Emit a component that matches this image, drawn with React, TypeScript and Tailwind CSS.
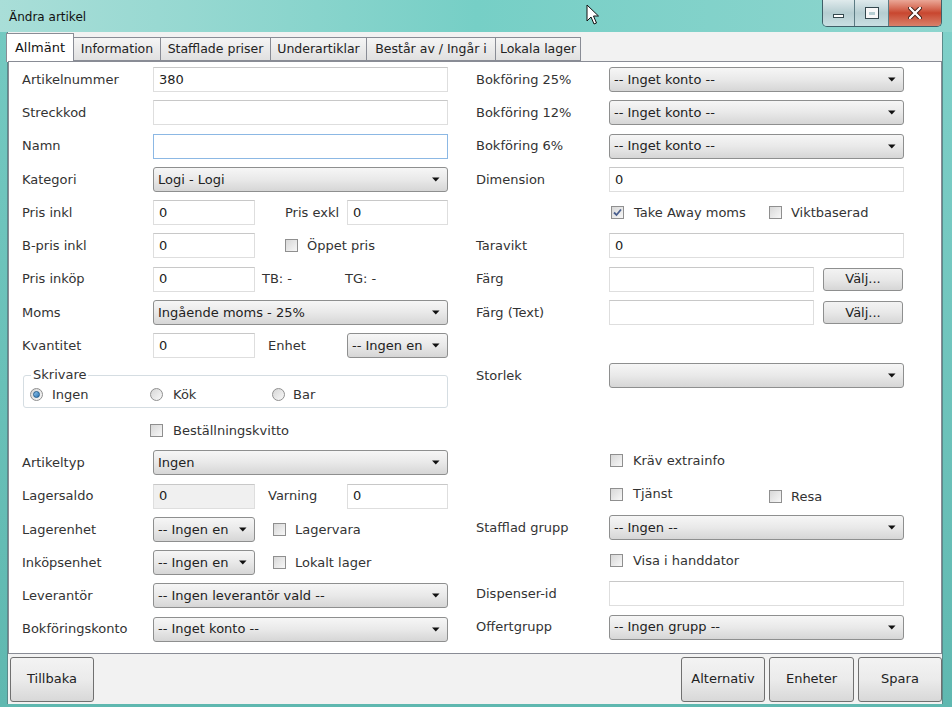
import React from "react";

type Props = { children?: React.ReactNode; className?: string };

function Arrow() {
  return (
    <svg width="8" height="5" viewBox="0 0 8 5" className="shrink-0">
      <path d="M0 0.5h7.5L3.75 4.5z" fill="#111" />
    </svg>
  );
}

function TextBox({
  value = "",
  className = "",
  focused = false,
  disabled = false,
}: {
  value?: string;
  className?: string;
  focused?: boolean;
  disabled?: boolean;
}) {
  const border = focused
    ? "border-[#8cb8e4]"
    : "border-[#dedede] border-t-[#c8c8c8]";
  return (
    <div
      className={`flex h-[25px] shrink-0 items-center border px-[5px] text-[#222] ${border} ${
        disabled ? "bg-[#f0f0f0]" : "bg-white"
      } ${className}`}
    >
      {value}
    </div>
  );
}

function Combo({ value = "", className = "" }: { value?: string; className?: string }) {
  return (
    <div
      className={`flex h-[25px] shrink-0 items-center justify-between rounded-[3px] border border-[#8e8f8f] bg-linear-to-b from-[#f6f6f6] via-[#e9e9e9] to-[#d6d6d6] pl-[4px] pr-[7px] text-[#222] ${className}`}
    >
      <span className="overflow-hidden whitespace-nowrap">{value}</span>
      <Arrow />
    </div>
  );
}

function Check({ checked = false }: { checked?: boolean }) {
  return (
    <span className="flex h-[13px] w-[13px] shrink-0 items-center justify-center border border-[#8f8f8f] bg-linear-to-br from-[#d8d8d8] to-[#f7f7f7]">
      {checked && (
        <svg width="9" height="9" viewBox="0 0 9 9">
          <path d="M1 4.5 L3.5 7 L8 1.5" fill="none" stroke="#4a5f8e" strokeWidth="1.8" />
        </svg>
      )}
    </span>
  );
}

function Radio({ checked = false }: { checked?: boolean }) {
  return (
    <span className="flex h-[13px] w-[13px] shrink-0 items-center justify-center rounded-full border border-[#8f8f8f] bg-linear-to-br from-[#d6d6d6] to-[#f8f8f8]">
      {checked && (
        <span className="h-[7px] w-[7px] rounded-full border border-[#1f5b8c] bg-linear-to-br from-[#8fc4ec] to-[#2a76b4]" />
      )}
    </span>
  );
}

function Row({ label = "", lw = "w-[131px]", children }: { label?: string; lw?: string } & Props) {
  return (
    <div className="flex h-[33.25px] items-center">
      <span className={`${lw} shrink-0 whitespace-nowrap text-[#333]`}>{label}</span>
      {children}
    </div>
  );
}

function Tab({ label, w, active = false }: { label: string; w: string; active?: boolean }) {
  if (active) {
    return (
      <div
        className={`${w} -mb-px -ml-[2px] flex h-[29px] items-center justify-center border border-b-0 border-[#898c95] bg-white text-[#111]`}
      >
        {label}
      </div>
    );
  }
  return (
    <div
      className={`${w} flex h-[24px] items-center justify-center whitespace-nowrap border border-l-0 border-[#898c95] bg-linear-to-b from-[#f5f5f5] to-[#e0e0e0] text-[12.5px] text-[#222]`}
    >
      {label}
    </div>
  );
}

function DlgButton({ label, w = "w-[84px]" }: { label: string; w?: string }) {
  return (
    <div
      className={`${w} flex h-[45px] items-center justify-center rounded-[3px] border border-[#707070] bg-linear-to-b from-[#f3f3f3] via-[#ebebeb] to-[#d8d8d8] text-[#222]`}
    >
      {label}
    </div>
  );
}

function CaptionButtons() {
  return (
    <div className="mr-[10px] flex h-[27px] overflow-hidden rounded-b-[5px] border border-t-0 border-[#3f5f68]">
      <div className="flex w-[32px] items-center justify-center border-r border-[#5c7b83] bg-linear-to-b from-[#dfeaec] via-[#b5cdd1] to-[#c9dfe2]">
        <span className="mt-[6px] h-[4px] w-[11px] border border-[#34484e] bg-white" />
      </div>
      <div className="flex w-[34px] items-center justify-center border-r border-[#5c7b83] bg-linear-to-b from-[#dfeaec] via-[#b5cdd1] to-[#c9dfe2]">
        <span className="h-[10px] w-[12px] border-[3px] border-t-[4px] border-[#f8f8f8] outline outline-[#34484e]" />
      </div>
      <div className="flex w-[52px] items-center justify-center bg-linear-to-b from-[#eaa797] via-[#c8462f] to-[#d8806a]">
        <svg width="14" height="12" viewBox="0 0 14 12">
          <path d="M2 1 L12 11 M12 1 L2 11" stroke="#3a1a12" strokeWidth="4" strokeLinecap="round" />
          <path d="M2 1 L12 11 M12 1 L2 11" stroke="#fff" strokeWidth="2.4" strokeLinecap="round" />
        </svg>
      </div>
    </div>
  );
}

export default function App() {
  return (
    <div className="relative h-[707px] w-[952px] overflow-hidden bg-[#7ccdc6] font-['DejaVu_Sans',sans-serif] text-[13px]">
      {/* title bar */}
      <div className="flex h-[32px] items-start justify-between bg-linear-to-r from-[#a9ded8] via-[#76cfc6] to-[#8ed5ce]">
        <span className="pl-[9px] pt-[8px] text-[12px] text-[#111]">Ändra artikel</span>
        <CaptionButtons />
      </div>

      <div className="flex h-[672px]">
        <div className="w-[7px] bg-linear-to-b from-[#74c9c1] to-[#5fb8b0]" />
        <div className="flex w-[936px] flex-col border-x border-[#5a8a8a] bg-[#f2f2f2]">
          {/* tabs */}
          <div className="flex h-[29px] items-end">
            <Tab label="Allmänt" w="w-[68px]" active />
            <Tab label="Information" w="w-[87px]" />
            <Tab label="Stafflade priser" w="w-[110px]" />
            <Tab label="Underartiklar" w="w-[96px]" />
            <Tab label="Består av / Ingår i" w="w-[129px]" />
            <Tab label="Lokala lager" w="w-[85px]" />
          </div>

          {/* panel */}
          <div className="flex h-[593px] gap-[28px] border border-[#898c95] bg-white pl-[13px] pt-px">
            <div className="flex w-[426px] flex-col">
              <Row label="Artikelnummer">
                <TextBox value="380" className="w-[295px]" />
              </Row>
              <Row label="Streckkod">
                <TextBox className="w-[295px]" />
              </Row>
              <Row label="Namn">
                <TextBox className="w-[295px]" focused />
              </Row>
              <Row label="Kategori">
                <Combo value="Logi - Logi" className="w-[295px]" />
              </Row>
              <Row label="Pris inkl">
                <TextBox value="0" className="w-[102px]" />
                <span className="ml-[30px] w-[62px] text-[#333]">Pris exkl</span>
                <TextBox value="0" className="w-[101px]" />
              </Row>
              <Row label="B-pris inkl">
                <TextBox value="0" className="w-[102px]" />
                <span className="ml-[30px]">
                  <Check />
                </span>
                <span className="ml-[9px] text-[#333]">Öppet pris</span>
              </Row>
              <Row label="Pris inköp">
                <TextBox value="0" className="w-[102px]" />
                <span className="ml-[7px] w-[83px] text-[#333]">TB: -</span>
                <span className="text-[#333]">TG: -</span>
              </Row>
              <Row label="Moms">
                <Combo value="Ingående moms - 25%" className="w-[295px]" />
              </Row>
              <Row label="Kvantitet">
                <TextBox value="0" className="w-[102px]" />
                <span className="ml-[13px] w-[79px] text-[#333]">Enhet</span>
                <Combo value="-- Ingen en" className="w-[101px]" />
              </Row>

              <div className="h-[52px] pt-[6px]">
                <fieldset className="ml-px w-[425px] rounded-[3px] border border-[#d5dde2] p-0">
                  <legend className="ml-[7px] px-[2px] leading-[14px] text-[#333]">Skrivare</legend>
                  <div className="flex h-[25px] items-center pl-[6px] text-[#333]">
                    <div className="flex w-[120px] items-center gap-[9px]">
                      <Radio checked />
                      <span>Ingen</span>
                    </div>
                    <div className="flex w-[122px] items-center gap-[10px]">
                      <Radio />
                      <span>Kök</span>
                    </div>
                    <div className="flex items-center gap-[8px]">
                      <Radio />
                      <span>Bar</span>
                    </div>
                  </div>
                </fieldset>
              </div>

              <div className="flex h-[32px] items-center pl-[128px] text-[#333]">
                <Check />
                <span className="ml-[10px]">Beställningskvitto</span>
              </div>

              <Row label="Artikeltyp">
                <Combo value="Ingen" className="w-[295px]" />
              </Row>
              <Row label="Lagersaldo">
                <TextBox value="0" className="w-[102px]" disabled />
                <span className="ml-[13px] w-[79px] text-[#333]">Varning</span>
                <TextBox value="0" className="w-[101px]" />
              </Row>
              <Row label="Lagerenhet">
                <Combo value="-- Ingen en" className="w-[102px]" />
                <span className="ml-[18px]">
                  <Check />
                </span>
                <span className="ml-[9px] text-[#333]">Lagervara</span>
              </Row>
              <Row label="Inköpsenhet">
                <Combo value="-- Ingen en" className="w-[102px]" />
                <span className="ml-[18px]">
                  <Check />
                </span>
                <span className="ml-[9px] text-[#333]">Lokalt lager</span>
              </Row>
              <Row label="Leverantör">
                <Combo value="-- Ingen leverantör vald --" className="w-[295px]" />
              </Row>
              <Row label="Bokföringskonto">
                <Combo value="-- Inget konto --" className="w-[295px]" />
              </Row>
            </div>

            <div className="flex w-[428px] flex-col">
              <Row label="Bokföring 25%" lw="w-[133px]">
                <Combo value="-- Inget konto --" className="w-[295px]" />
              </Row>
              <Row label="Bokföring 12%" lw="w-[133px]">
                <Combo value="-- Inget konto --" className="w-[295px]" />
              </Row>
              <Row label="Bokföring 6%" lw="w-[133px]">
                <Combo value="-- Inget konto --" className="w-[295px]" />
              </Row>
              <Row label="Dimension" lw="w-[133px]">
                <TextBox value="0" className="w-[295px]" />
              </Row>
              <Row lw="w-[133px]">
                <div className="flex w-[160px] items-center gap-[10px] pl-[2px] text-[#333]">
                  <Check checked />
                  <span>Take Away moms</span>
                </div>
                <div className="flex items-center gap-[9px] text-[#333]">
                  <Check />
                  <span>Viktbaserad</span>
                </div>
              </Row>
              <Row label="Taravikt" lw="w-[133px]">
                <TextBox value="0" className="w-[295px]" />
              </Row>
              <Row label="Färg" lw="w-[133px]">
                <TextBox className="w-[205px]" />
                <div className="ml-[9px] flex h-[23px] w-[80px] items-center justify-center rounded-[3px] border border-[#8e8f8f] bg-linear-to-b from-[#f3f3f3] via-[#e8e8e8] to-[#d6d6d6] text-[#222]">
                  Välj...
                </div>
              </Row>
              <Row label="Färg (Text)" lw="w-[133px]">
                <TextBox className="w-[205px]" />
                <div className="ml-[9px] flex h-[23px] w-[80px] items-center justify-center rounded-[3px] border border-[#8e8f8f] bg-linear-to-b from-[#f3f3f3] via-[#e8e8e8] to-[#d6d6d6] text-[#222]">
                  Välj...
                </div>
              </Row>
              <div className="h-[30px]" />
              <Row label="Storlek" lw="w-[133px]">
                <Combo className="w-[295px]" />
              </Row>
              <div className="h-[52px]" />
              <Row lw="w-[133px]">
                <div className="flex items-center gap-[10px] pl-[1px] text-[#333]">
                  <Check />
                  <span>Kräv extrainfo</span>
                </div>
              </Row>
              <Row lw="w-[133px]">
                <div className="flex w-[160px] items-center gap-[10px] pl-[1px] text-[#333]">
                  <Check />
                  <span>Tjänst</span>
                </div>
                <div className="mt-[5px] flex items-center gap-[9px] text-[#333]">
                  <Check />
                  <span>Resa</span>
                </div>
              </Row>
              <Row label="Stafflad grupp" lw="w-[133px]">
                <Combo value="-- Ingen --" className="w-[295px]" />
              </Row>
              <Row lw="w-[133px]">
                <div className="flex items-center gap-[10px] pl-[1px] text-[#333]">
                  <Check />
                  <span>Visa i handdator</span>
                </div>
              </Row>
              <Row label="Dispenser-id" lw="w-[133px]">
                <TextBox className="w-[295px]" />
              </Row>
              <Row label="Offertgrupp" lw="w-[133px]">
                <Combo value="-- Ingen grupp --" className="w-[295px]" />
              </Row>
            </div>
          </div>

          {/* bottom bar */}
          <div className="flex h-[50px] items-center justify-between pl-[2px]">
            <DlgButton label="Tillbaka" />
            <div className="flex gap-[4px]">
              <DlgButton label="Alternativ" />
              <DlgButton label="Enheter" w="w-[85px]" />
              <DlgButton label="Spara" />
            </div>
          </div>
        </div>
        <div className="w-[9px] bg-linear-to-b from-[#7fd0c9] to-[#5fb8b0]" />
      </div>
      <div className="h-[3px] bg-[#5fb8b0]" />

      {/* mouse pointer */}
      <svg className="absolute left-[586px] top-[4px]" width="14" height="22" viewBox="0 0 14 22">
        <path d="M1 1 L1 17 L5 13 L8 20 L10.5 19 L7.5 12 L12.5 12 Z" fill="#fff" stroke="#111" strokeWidth="1" />
      </svg>
    </div>
  );
}
